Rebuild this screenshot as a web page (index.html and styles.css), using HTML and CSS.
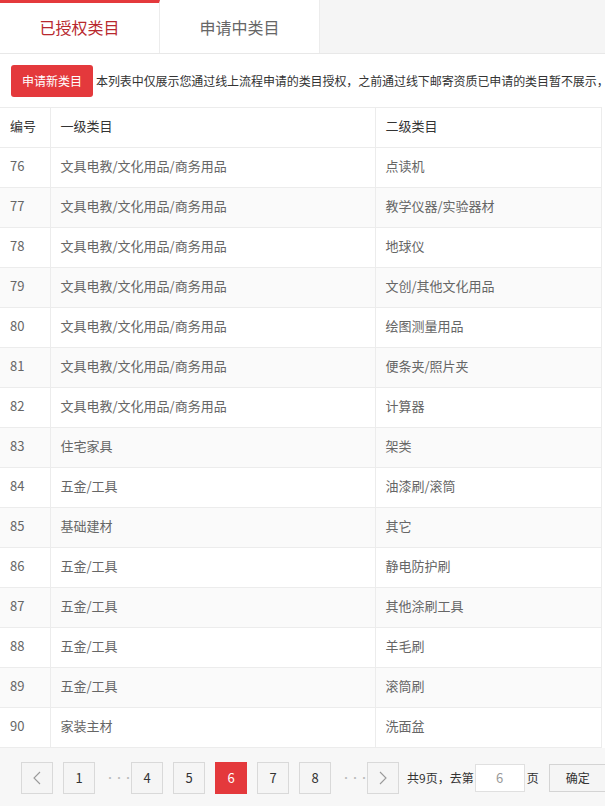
FILE: index.html
```html
<!DOCTYPE html>
<html lang="zh-CN">
<head>
<meta charset="utf-8">
<title>已授权类目</title>
<link rel="stylesheet" href="styles.css">
</head>
<body>
<div class="page">
  <div class="tabs">
    <div class="tab active">已授权类目</div>
    <div class="tab">申请中类目</div>
  </div>
  <div class="toolbar">
    <button class="btn-apply">申请新类目</button>
    <span class="note">本列表中仅展示您通过线上流程申请的类目授权，之前通过线下邮寄资质已申请的类目暂不展示，</span>
  </div>
  <table class="grid">
    <colgroup><col class="c1"><col class="c2"><col class="c3"></colgroup>
    <thead>
      <tr><th>编号</th><th>一级类目</th><th>二级类目</th></tr>
    </thead>
    <tbody>
      <tr><td>76</td><td>文具电教/文化用品/商务用品</td><td>点读机</td></tr>
      <tr><td>77</td><td>文具电教/文化用品/商务用品</td><td>教学仪器/实验器材</td></tr>
      <tr><td>78</td><td>文具电教/文化用品/商务用品</td><td>地球仪</td></tr>
      <tr><td>79</td><td>文具电教/文化用品/商务用品</td><td>文创/其他文化用品</td></tr>
      <tr><td>80</td><td>文具电教/文化用品/商务用品</td><td>绘图测量用品</td></tr>
      <tr><td>81</td><td>文具电教/文化用品/商务用品</td><td>便条夹/照片夹</td></tr>
      <tr><td>82</td><td>文具电教/文化用品/商务用品</td><td>计算器</td></tr>
      <tr><td>83</td><td>住宅家具</td><td>架类</td></tr>
      <tr><td>84</td><td>五金/工具</td><td>油漆刷/滚筒</td></tr>
      <tr><td>85</td><td>基础建材</td><td>其它</td></tr>
      <tr><td>86</td><td>五金/工具</td><td>静电防护刷</td></tr>
      <tr><td>87</td><td>五金/工具</td><td>其他涂刷工具</td></tr>
      <tr><td>88</td><td>五金/工具</td><td>羊毛刷</td></tr>
      <tr><td>89</td><td>五金/工具</td><td>滚筒刷</td></tr>
      <tr><td>90</td><td>家装主材</td><td>洗面盆</td></tr>
    </tbody>
  </table>
  <div class="pager">
    <a class="pg arrow">
      <svg width="8" height="14" viewBox="0 0 8 14"><path d="M7 1L1 7l6 6" fill="none" stroke="#999" stroke-width="1.1"/></svg>
    </a>
    <a class="pg">1</a>
    <span class="dots">···</span>
    <a class="pg">4</a>
    <a class="pg">5</a>
    <a class="pg cur">6</a>
    <a class="pg">7</a>
    <a class="pg">8</a>
    <span class="dots">···</span>
    <a class="pg arrow next">
      <svg width="8" height="14" viewBox="0 0 8 14"><path d="M1 1l6 6-6 6" fill="none" stroke="#999" stroke-width="1.1"/></svg>
    </a>
    <span class="total">共9页，去第</span>
    <input class="goto" type="text" value="6">
    <span class="unit">页</span>
    <button class="ok">确定</button>
  </div>
</div>
</body>
</html>
```

FILE: styles.css
```css
* { box-sizing: border-box; }
html, body { margin: 0; padding: 0; }
body {
  font-family: "Noto Sans CJK SC", "Noto Sans", sans-serif;
  color: #666;
  background: #fff;
  width: 605px;
  overflow: hidden;
}
.page { width: 605px; overflow: hidden; }

.tabs {
  display: flex;
  height: 54px;
  background: #f5f5f5;
  border-bottom: 1px solid #e8e8e8;
}
.tab {
  width: 160px;
  height: 53px;
  background: #fff;
  display: flex;
  align-items: center;
  justify-content: center;
  font-size: 16px;
  color: #666;
  border-right: 1px solid #ececec;
  padding-top: 1px;
}
.tab.active {
  color: #b8282e;
  border-top: 3px solid #e4393c;
  padding-top: 0;
  padding-bottom: 2px;
}

.toolbar {
  display: flex;
  align-items: center;
  height: 53px;
  padding: 0 0 0 11px;
  white-space: nowrap;
  overflow: hidden;
}
.btn-apply {
  flex: none;
  width: 82px;
  height: 32px;
  border: 0;
  border-radius: 3px;
  background: #e4393c;
  color: #fff;
  font-family: inherit;
  font-size: 12px;
  padding: 0;
  margin-right: 3px;
}
.note {
  font-size: 12px;
  color: #333;
  letter-spacing: -0.08px;
}

.grid {
  width: 601px;
  border-collapse: collapse;
  table-layout: fixed;
  font-size: 13px;
}
.c1 { width: 50px; }
.c2 { width: 325px; }
.c3 { width: 226px; }
.grid th, .grid td {
  height: 40px;
  padding: 0 10px 4px;
  text-align: left;
  border: 1px solid #ececec;
  white-space: nowrap;
}
.grid th:first-child, .grid td:first-child { border-left: 0; }
.grid th {
  font-weight: normal;
  color: #333;
}
.grid td { color: #666; }
.grid tbody tr:nth-child(even) td { background: #fafafa; }

.pager {
  display: flex;
  align-items: center;
  height: 59px;
  background: #f7f7f7;
  padding-left: 21px;
  white-space: nowrap;
}
.pg {
  flex: none;
  width: 32px;
  height: 32px;
  margin-right: 10px;
  border: 1px solid #d9d9d9;
  background: #f5f5f5;
  display: flex;
  align-items: center;
  justify-content: center;
  font-size: 13px;
  color: #333;
}
.pg.cur {
  background: #e4393c;
  border-color: #e4393c;
  color: #fff;
}
.pg.next { margin-right: 8px; }
.dots {
  width: 16px;
  margin-right: 10px;
  color: #bbb;
  font-size: 10px;
  text-align: center;
  letter-spacing: -1px;
}
.total {
  font-size: 12px;
  color: #333;
}
.goto {
  width: 50px;
  height: 28px;
  margin: 0 2px 0 1px;
  border: 1px solid #e0e0e0;
  background: #fff;
  text-align: center;
  font-family: inherit;
  font-size: 13px;
  color: #999;
  padding: 0;
  outline: none;
}
.unit {
  font-size: 12px;
  color: #333;
  margin-right: 10px;
}
.ok {
  flex: none;
  width: 58px;
  height: 28px;
  border: 1px solid #d4d4d4;
  background: #f5f5f5;
  font-family: inherit;
  font-size: 12px;
  color: #333;
  padding: 0;
}
```
